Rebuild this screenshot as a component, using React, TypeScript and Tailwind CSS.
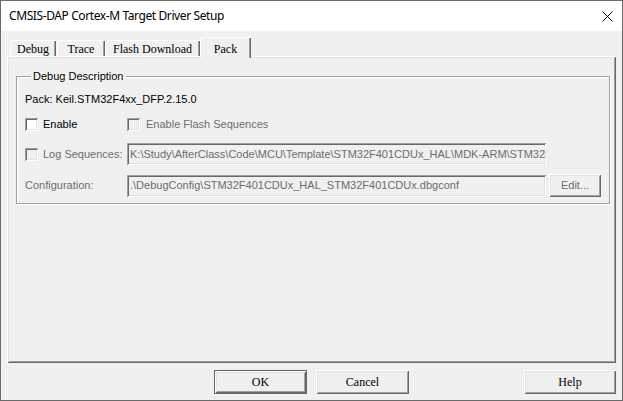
import React from 'react';

const raised =
  'shadow-[inset_1px_1px_0_#ffffff,inset_-1px_-1px_0_#696969,inset_2px_2px_0_#e3e3e3,inset_-2px_-2px_0_#a0a0a0]';
const sunken =
  'shadow-[inset_1px_1px_0_#a0a0a0,inset_-1px_-1px_0_#ffffff,inset_2px_2px_0_#696969,inset_-2px_-2px_0_#e3e3e3]';

const dlgFont = "font-['Liberation_Sans',Arial,sans-serif] text-[11px]";
const oldFont = "font-['Liberation_Serif','Times_New_Roman',serif] text-[12px]";

const Check: React.FC<{ disabled?: boolean }> = ({ disabled }) => (
  <div className={`w-[13px] h-[13px] shrink-0 ${sunken} ${disabled ? 'bg-[#f0f0f0]' : 'bg-white'}`} />
);

const Field: React.FC<{ value: string }> = ({ value }) => (
  <div
    className={`w-[419px] h-[22px] shrink-0 bg-[#f0f0f0] ${sunken} flex items-center pl-[3px] pr-[2px] overflow-hidden whitespace-nowrap text-[#6d6d6d]`}
  >
    {value}
  </div>
);

const tabs = [
  { label: 'Debug', w: 'w-[46px] ml-[3px]' },
  { label: 'Trace', w: 'w-[48px] ml-[1px]' },
  { label: 'Flash Download', w: 'w-[95px]' },
];

export default function App() {
  return (
    <div className="w-[623px] h-[401px] flex flex-col border border-[#6b6b6b] bg-[#f0f0f0] overflow-hidden">
      <div className="h-[30px] shrink-0 bg-white flex items-center pl-[8px] pr-[9px]">
        <span className="font-['Noto_Sans','Open_Sans',sans-serif] text-[12px] tracking-[-0.4px] text-black">
          CMSIS-DAP Cortex-M Target Driver Setup
        </span>
        <svg className="ml-auto" width="11" height="11" viewBox="0 0 11 11">
          <path d="M0.5 0.5 L10.5 10.5 M10.5 0.5 L0.5 10.5" stroke="#000" strokeWidth="1" />
        </svg>
      </div>

      <div className={`flex-1 flex flex-col px-[6px] pt-[6px] pb-[6px] ${dlgFont}`}>
        <div className={`h-[19px] shrink-0 flex items-end ${oldFont} text-black`}>
          {tabs.map((t) => (
            <div
              key={t.label}
              className={`${t.w} h-[16px] flex items-center justify-center pt-[1px] rounded-tl-[2px] shadow-[inset_1px_1px_0_#ffffff,inset_-1px_0_0_#696969,inset_-2px_0_0_#a0a0a0]`}
            >
              {t.label}
            </div>
          ))}
          <div className="w-[51px] h-[21px] -mb-[2px] relative z-10 bg-[#f0f0f0] flex items-start justify-center pt-[3px] rounded-tl-[2px] shadow-[inset_1px_1px_0_#ffffff,inset_-1px_0_0_#696969,inset_-2px_0_0_#a0a0a0]">
            Pack
          </div>
        </div>

        <div className={`flex-1 ${raised} pt-[14px] pl-[9px] pr-[6px]`}>
          <fieldset className="border border-[#a0a0a0] shadow-[inset_1px_1px_0_#ffffff,1px_1px_0_#ffffff] pl-[8px] pb-[6px]">
            <legend className="ml-[6px] px-[2px] leading-[13px] text-black">Debug Description</legend>
            <div className="flex flex-col pt-[9px]">
              <div className="h-[14px] flex items-center text-black">Pack: Keil.STM32F4xx_DFP.2.15.0</div>

              <div className="h-[14px] mt-[11px] flex items-center">
                <div className="w-[102px] flex items-center">
                  <Check />
                  <span className="ml-[5px] text-black">Enable</span>
                </div>
                <Check disabled />
                <span className="ml-[6px] text-[#6d6d6d]">Enable Flash Sequences</span>
              </div>

              <div className="h-[22px] mt-[12px] flex items-center">
                <div className="w-[102px] flex items-center">
                  <Check disabled />
                  <span className="ml-[5px] text-[#6d6d6d]">Log Sequences:</span>
                </div>
                <Field value="K:\Study\AfterClass\Code\MCU\Template\STM32F401CDUx_HAL\MDK-ARM\STM32F401CDUx_HAL" />
              </div>

              <div className="h-[23px] mt-[9px] flex items-center">
                <div className="w-[102px] text-[#6d6d6d]">Configuration:</div>
                <Field value=".\DebugConfig\STM32F401CDUx_HAL_STM32F401CDUx.dbgconf" />
                <button
                  className={`ml-[3px] w-[52px] h-[23px] ${raised} text-[#6d6d6d] flex items-center justify-center`}
                >
                  Edit...
                </button>
              </div>
            </div>
          </fieldset>
        </div>

        <div className={`h-[24px] mt-[7px] shrink-0 flex ${oldFont} text-black`}>
          <button className="ml-[207px] w-[93px] h-[24px] border border-[#646464]">
            <div className={`w-full h-full ${raised} flex items-center justify-center`}>OK</div>
          </button>
          <button className={`ml-[9px] w-[93px] h-[24px] ${raised} flex items-center justify-center`}>
            Cancel
          </button>
          <button className={`ml-auto w-[92px] h-[24px] ${raised} flex items-center justify-center`}>
            Help
          </button>
        </div>
      </div>
    </div>
  );
}
